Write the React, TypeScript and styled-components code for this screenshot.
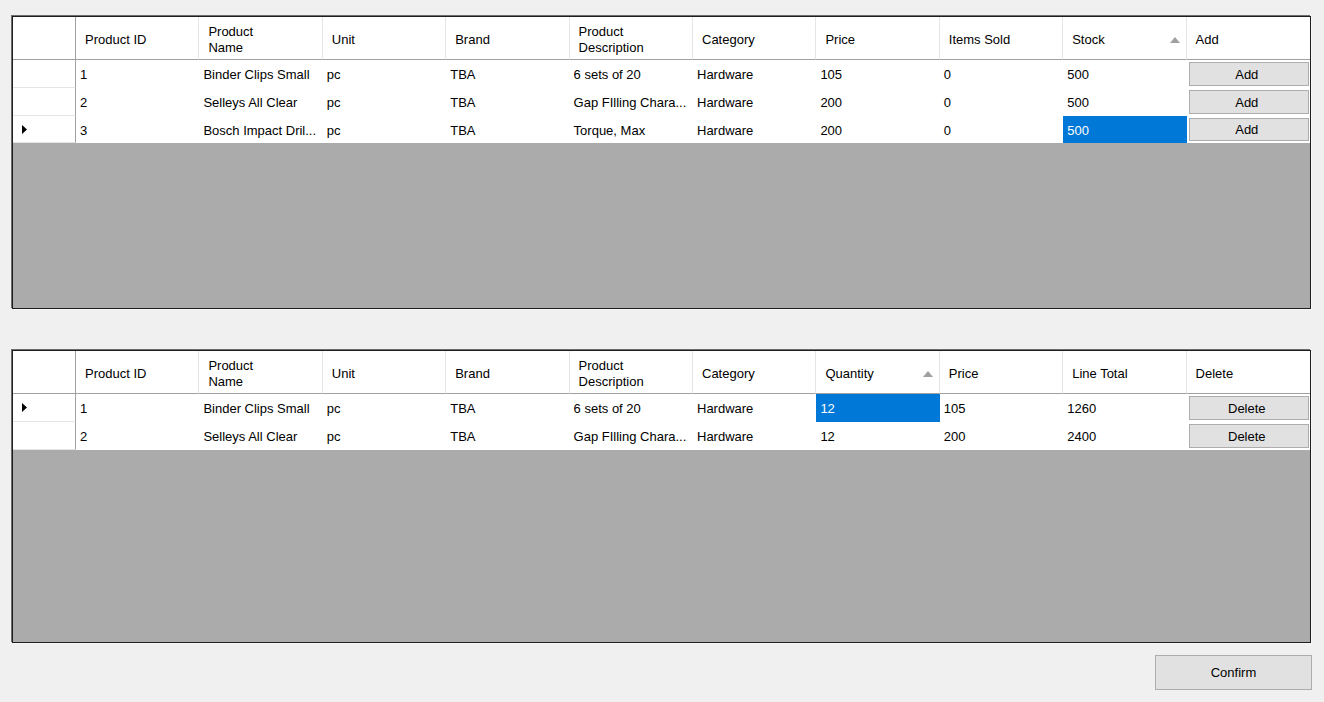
import React from 'react'
import styled, { createGlobalStyle } from 'styled-components'

const GlobalStyle = createGlobalStyle`
  html, body {
    margin: 0;
    padding: 0;
    background: #f0f0f0;
  }
  body {
    font-family: 'Liberation Sans', Arial, sans-serif;
    font-size: 13px;
    color: #000;
  }
`

const Page = styled.div`
  width: 1324px;
  height: 702px;
  box-sizing: border-box;
  padding: 16px 13px 0 12px;
  display: flex;
  flex-direction: column;
`

const Frame = styled.div<{ $gap?: number }>`
  height: 293px;
  flex-shrink: 0;
  box-sizing: border-box;
  border: 1px solid #1e1e1e;
  box-shadow: -1px -1px 0 #6d6d6d, 1px 1px 0 #f8f8f8;
  background: #ababab;
  display: flex;
  flex-direction: column;
  margin-bottom: ${({ $gap }) => $gap ?? 0}px;
`

const Row = styled.div<{ $height: number }>`
  display: grid;
  grid-template-columns: 63px repeat(10, 1fr);
  height: ${({ $height }) => $height}px;
  background: #fff;
`

const HeaderCell = styled.div`
  display: flex;
  align-items: center;
  justify-content: space-between;
  box-sizing: border-box;
  padding: 4px 6px 0 9px;
  border-right: 1px solid #e5e5e5;
  border-bottom: 1px solid #a0a0a0;
  line-height: 16px;
  white-space: pre-line;
  &:last-child {
    border-right: none;
  }
`

const CornerCell = styled.div`
  box-sizing: border-box;
  border-right: 1px solid #a0a0a0;
  border-bottom: 1px solid #a0a0a0;
`

const RowHeaderCell = styled.div`
  box-sizing: border-box;
  border-right: 1px solid #a0a0a0;
  border-bottom: 1px solid #e5e5e5;
  display: flex;
  align-items: center;
  padding-left: 9px;
`

const Cell = styled.div<{ $selected?: boolean }>`
  display: flex;
  align-items: center;
  padding: 1px 4px 0;
  overflow: hidden;
  white-space: nowrap;
  background: ${({ $selected }) => ($selected ? '#0078d7' : '#fff')};
  color: ${({ $selected }) => ($selected ? '#fff' : '#000')};
`

const ButtonCell = styled.div`
  display: flex;
  padding: 2px 1px 2px 2px;
`

const CellButton = styled.button`
  flex: 1;
  margin: 0;
  padding: 0 4px 0 0;
  border: 1px solid #adadad;
  background: #e1e1e1;
  font: inherit;
  color: #000;
`

const Filler = styled.div`
  flex: 1;
`

const Footer = styled.div`
  display: flex;
  justify-content: flex-end;
`

const ConfirmButton = styled.button`
  width: 157px;
  height: 35px;
  margin-right: -1px;
  border: 1px solid #adadad;
  background: #e1e1e1;
  font: inherit;
  color: #000;
  padding: 0;
`

const SortGlyph = () => (
  <svg width="10" height="6" viewBox="0 0 10 6">
    <polygon points="0,6 5,0 10,6" fill="#a0a0a0" />
  </svg>
)

const RowArrow = () => (
  <svg width="5" height="9" viewBox="0 0 5 9">
    <polygon points="0,0 5,4.5 0,9" fill="#000" />
  </svg>
)

type Column = { title: string; sorted?: boolean }

type GridProps = {
  columns: Column[]
  rows: string[][]
  buttonLabel: string
  current: number
  selectedCol: number
  gap?: number
}

const DataGrid = ({ columns, rows, buttonLabel, current, selectedCol, gap }: GridProps) => (
  <Frame $gap={gap}>
    <Row $height={43}>
      <CornerCell />
      {columns.map((c) => (
        <HeaderCell key={c.title}>
          <span>{c.title}</span>
          {c.sorted && <SortGlyph />}
        </HeaderCell>
      ))}
    </Row>
    {rows.map((r, i) => (
      <Row $height={i === 2 ? 27 : 28} key={i}>
        <RowHeaderCell>{i === current && <RowArrow />}</RowHeaderCell>
        {r.map((v, j) => (
          <Cell key={j} $selected={i === current && j === selectedCol}>
            {v}
          </Cell>
        ))}
        <ButtonCell>
          <CellButton>{buttonLabel}</CellButton>
        </ButtonCell>
      </Row>
    ))}
    <Filler />
  </Frame>
)

const productColumns: Column[] = [
  { title: 'Product ID' },
  { title: 'Product\nName' },
  { title: 'Unit' },
  { title: 'Brand' },
  { title: 'Product\nDescription' },
  { title: 'Category' },
  { title: 'Price' },
  { title: 'Items Sold' },
  { title: 'Stock', sorted: true },
  { title: 'Add' },
]

const productRows = [
  ['1', 'Binder Clips Small', 'pc', 'TBA', '6 sets of 20', 'Hardware', '105', '0', '500'],
  ['2', 'Selleys All Clear', 'pc', 'TBA', 'Gap FIlling Chara...', 'Hardware', '200', '0', '500'],
  ['3', 'Bosch Impact Dril...', 'pc', 'TBA', 'Torque, Max', 'Hardware', '200', '0', '500'],
]

const cartColumns: Column[] = [
  { title: 'Product ID' },
  { title: 'Product\nName' },
  { title: 'Unit' },
  { title: 'Brand' },
  { title: 'Product\nDescription' },
  { title: 'Category' },
  { title: 'Quantity', sorted: true },
  { title: 'Price' },
  { title: 'Line Total' },
  { title: 'Delete' },
]

const cartRows = [
  ['1', 'Binder Clips Small', 'pc', 'TBA', '6 sets of 20', 'Hardware', '12', '105', '1260'],
  ['2', 'Selleys All Clear', 'pc', 'TBA', 'Gap FIlling Chara...', 'Hardware', '12', '200', '2400'],
]

export default function App() {
  return (
    <>
      <GlobalStyle />
      <Page>
        <DataGrid
          columns={productColumns}
          rows={productRows}
          buttonLabel="Add"
          current={2}
          selectedCol={8}
          gap={41}
        />
        <DataGrid
          columns={cartColumns}
          rows={cartRows}
          buttonLabel="Delete"
          current={0}
          selectedCol={6}
          gap={12}
        />
        <Footer>
          <ConfirmButton>Confirm</ConfirmButton>
        </Footer>
      </Page>
    </>
  )
}
